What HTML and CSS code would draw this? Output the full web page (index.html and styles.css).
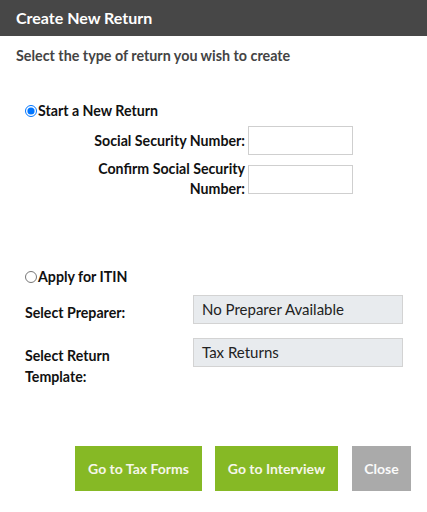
FILE: index.html
```html
<!DOCTYPE html>
<html>
<head>
<meta charset="utf-8">
<link rel="stylesheet" href="styles.css">
</head>
<body>
<div class="dialog">
  <div class="header">Create New Return</div>
  <div class="subtitle">Select the type of return you wish to create</div>

  <label class="radio-row first"><input type="radio" name="t" checked>Start a New Return</label>

  <div class="ssn-row">
    <div class="ssn-label">Social Security Number:</div>
    <input class="ssn-input" type="text">
  </div>
  <div class="ssn-row second">
    <div class="ssn-label">Confirm Social Security<br>Number:</div>
    <input class="ssn-input" type="text">
  </div>

  <label class="radio-row itin"><input type="radio" name="t">Apply for ITIN</label>

  <div class="select-row">
    <div class="select-label">Select Preparer:</div>
    <div class="select-box">No Preparer Available</div>
  </div>
  <div class="select-row template">
    <div class="select-label">Select Return<br>Template:</div>
    <div class="select-box">Tax Returns</div>
  </div>

  <div class="buttons">
    <button class="btn green w1">Go to Tax Forms</button>
    <button class="btn green w2">Go to Interview</button>
    <button class="btn gray w3">Close</button>
  </div>
</div>
</body>
</html>
```

FILE: styles.css
```css
* { box-sizing: border-box; }
body {
  margin: 0;
  background: #fff;
  font-family: Lato, "Open Sans", sans-serif;
  color: #111;
}
.dialog {
  display: flex;
  flex-direction: column;
  width: 427px;
  height: 512px;
}
.header {
  height: 36px;
  line-height: 36px;
  background: #474747;
  color: #fff;
  font-weight: bold;
  font-size: 16px;
  padding-left: 16px;
}
.subtitle {
  margin-top: 12px;
  padding-left: 16px;
  font-size: 14.3px;
  line-height: 16px;
  font-weight: bold;
  color: #444;
}
.radio-row {
  display: flex;
  align-items: center;
  margin-left: 25px;
  font-size: 14.2px;
  font-weight: bold;
  line-height: 18px;
  color: #111;
}
.radio-row input {
  margin: 0 1px 0 0;
  width: 12px;
  height: 12px;
}
.radio-row.first { margin-top: 38px; }
.radio-row.itin { margin-top: 69px; }
.ssn-row {
  display: flex;
  align-items: center;
  margin-top: 6px;
}
.ssn-row.second { margin-top: 4px; }
.ssn-label {
  width: 246px;
  padding-right: 1px;
  text-align: right;
  font-size: 14.2px;
  font-weight: bold;
  line-height: 20px;
  color: #111;
}
.ssn-input {
  margin: 0 0 0 2px;
  width: 105px;
  height: 29px;
  border: 1px solid #cfcfcf;
  background: #fff;
  padding: 0;
}
.select-row {
  display: flex;
  align-items: flex-start;
  margin-top: 9px;
  padding-left: 25px;
}
.select-row.template { margin-top: 14px; }
.select-label {
  width: 168px;
  padding-top: 7px;
  font-size: 14.2px;
  font-weight: bold;
  line-height: 21px;
  color: #111;
}
.select-box {
  width: 210px;
  height: 29px;
  background: #e8ebee;
  border: 1px solid #d3d3d3;
  padding: 5px 0 0 8px;
  font-size: 15px;
  line-height: 17px;
  color: #222;
}
.buttons {
  display: flex;
  justify-content: flex-end;
  margin-top: 59px;
  padding-right: 16px;
}
.btn {
  height: 45px;
  border: none;
  padding: 0;
  font-family: inherit;
  font-size: 14px;
  font-weight: bold;
  color: #f6f6ea;
  cursor: pointer;
}
.btn.green { background: #86b925; }
.btn.gray { background: #aaaaaa; color: #fafafa; }
.w1 { width: 127px; margin-right: 13px; }
.w2 { width: 123px; margin-right: 14px; }
.w3 { width: 59px; }
```
